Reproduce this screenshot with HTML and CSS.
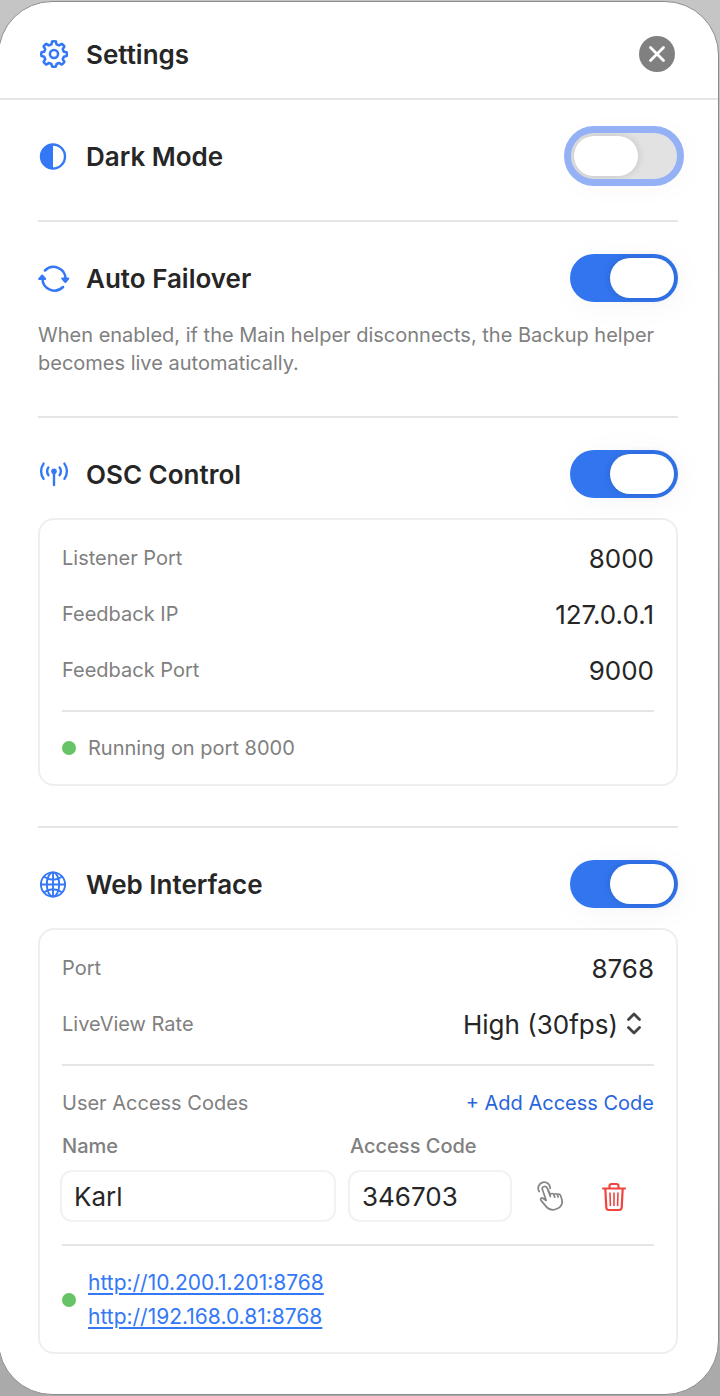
FILE: index.html
```html
<!DOCTYPE html>
<html lang="en">
<head>
<meta charset="utf-8">
<meta name="viewport" content="width=device-width, initial-scale=1">
<title>Settings</title>
<link rel="stylesheet" href="styles.css">
</head>
<body>
<main class="sheet">
  <header class="header">
    <svg class="icon" viewBox="-1 -.5 34 34" fill="none" stroke="currentColor" stroke-width="2.7" stroke-linejoin="round"><path d="M14 3.200q2-.6 4 0l.7 3.100 2.700 1.100 2.800-1.700q1.800 1 2.800 2.800l-1.700 2.800 1.100 2.700 3 .7q.6 2 0 4l-3 .7-1.100 2.700 1.700 2.800q-1 1.800-2.800 2.800l-2.800-1.700-2.700 1.100-.7 2.700q-2 .6-4 0l-.7-2.700-2.700-1.100-2.800 1.700q-1.800-1-2.800-2.800l1.700-2.800-1.100-2.700-2.900-.7q-.6-2 0-4l2.900-.7 1.100-2.700L5 8.500q1-1.800 2.800-2.800l2.800 1.700 2.700-1.100z"/><circle cx="16" cy="16.500" r="4.300"/></svg>
    <h1 class="title">Settings</h1>
    <button class="close" type="button" aria-label="Close"><svg viewBox="0 0 36 36" fill="none" stroke="#fff" stroke-width="2.8" stroke-linecap="round"><path d="M11.5 11.5l13 13M24.5 11.5l-13 13"/></svg></button>
  </header>

  <div class="content">
    <section class="section">
      <div class="heading">
        <svg class="icon" viewBox="0 0 32 32"><circle cx="15" cy="16.500" r="12" fill="none" stroke="currentColor" stroke-width="2.400"/><path d="M15 4.500a12 12 0 0 0 0 24z" fill="currentColor"/></svg>
        <h2 class="title"><label for="dark">Dark Mode</label></h2>
        <input class="toggle focused" type="checkbox" role="switch" id="dark">
      </div>
    </section>

    <section class="section">
      <div class="heading">
        <svg class="icon" viewBox="0 0 32 32" fill="none" stroke="currentColor" stroke-width="2.5" stroke-linecap="round"><path d="M7 8.500a12 12 0 0 1 20.500 8.500M25 25a12 12 0 0 1-20.500-8.500"/><path d="M24.300 16.500h6l-3 3.500zM1.200 17h6l-3-3.500z" fill="currentColor" stroke-width="2" stroke-linejoin="round"/></svg>
        <h2 class="title"><label for="failover">Auto Failover</label></h2>
        <input class="toggle" type="checkbox" role="switch" id="failover" checked>
      </div>
      <p class="hint">When enabled, if the Main helper disconnects, the Backup helper becomes live automatically.</p>
    </section>

    <section class="section">
      <div class="heading">
        <svg class="icon" viewBox="0 0 32 32" fill="none" stroke="currentColor" stroke-width="2.400" stroke-linecap="round"><path d="M16 13v14M10.400 9.400a7 7 0 0 0 0 7.800M21.600 9.400a7 7 0 0 1 0 7.800M5.600 5.600a13 13 0 0 0 0 15.300M26.400 5.600a13 13 0 0 1 0 15.300"/><circle cx="16" cy="13.300" r="2.800" fill="currentColor" stroke="none"/></svg>
        <h2 class="title"><label for="osc">OSC Control</label></h2>
        <input class="toggle" type="checkbox" role="switch" id="osc" checked>
      </div>
      <div class="card">
        <div class="row"><label for="listener">Listener Port</label><input class="value" id="listener" type="text" value="8000"></div>
        <div class="row"><label for="ip">Feedback IP</label><input class="value" id="ip" type="text" value="127.0.0.1"></div>
        <div class="row"><label for="feedback">Feedback Port</label><input class="value" id="feedback" type="text" value="9000"></div>
        <div class="status"><span class="dot"></span><span>Running on port 8000</span></div>
      </div>
    </section>

    <section class="section">
      <div class="heading">
        <svg class="icon" viewBox="0 0 32 32" fill="none" stroke="currentColor" stroke-width="1.900"><circle cx="15" cy="16.500" r="12.100"/><ellipse cx="15" cy="16.500" rx="6.200" ry="12.100"/><path d="M15 4.500v24M3 16.500h24M6 8.700q9 6 18 0M6 24.300q9-6 18 0"/></svg>
        <h2 class="title"><label for="web">Web Interface</label></h2>
        <input class="toggle" type="checkbox" role="switch" id="web" checked>
      </div>
      <div class="card">
        <div class="row"><label for="port">Port</label><input class="value" id="port" type="text" value="8768"></div>
        <div class="row">
          <label for="rate">LiveView Rate</label>
          <span class="picker">
            <select id="rate"><option>High (30fps)</option></select>
            <svg viewBox="0 0 16 24" fill="none" stroke="#444" stroke-width="2.800" stroke-linecap="round" stroke-linejoin="round"><path d="M2.500 7.500L8 2 13.500 7.500M2.500 15.500L8 21 13.500 15.500"/></svg>
          </span>
        </div>
        <div class="access">
          <div class="access-head"><span>User Access Codes</span><button class="add" type="button">+ Add Access Code</button></div>
          <div class="codes">
            <label for="name">Name</label>
            <label for="code">Access Code</label>
            <input class="field name" id="name" type="text" value="Karl">
            <input class="field" id="code" type="text" value="346703">
            <button class="tool" type="button" aria-label="Touch access"><svg viewBox="0 0 32 32" fill="none" stroke="#858585" stroke-width="1.700" stroke-linecap="round" stroke-linejoin="round"><path d="M5.200 11.500A6 6 0 1 1 16.200 8.500M9.600 6.700c-1.400.5-1.600 1.700-1.200 2.800l3.800 11-3.300-2.300c-1.500-.9-3 .9-1.700 2.400l4.800 5.800c3 3.600 7.500 4.200 11.500 2.200 4.200-2.200 5.400-6.200 4-10.300l-1.200-3.300c-.6-1.500-2.600-1.200-2.800.2-.4-1.700-3-2-3.500-.3-.5-1.700-3.100-1.900-3.600-.3l-3.300-6.600c-.6-1.300-2-1.800-3.500-1.300zM14 10.500l2.400 6M19.900 14.900l.8 2.200M23.500 15.200l.6 1.800"/></svg></button>
            <button class="tool" type="button" aria-label="Delete"><svg viewBox="0 0 32 32" fill="none" stroke="#f0453f" stroke-width="2.200" stroke-linecap="round" stroke-linejoin="round"><path d="M5 8.500h22M11.500 8.500V6q0-2 2-2h5q2 0 2 2v2.500M7.300 8.500l1 19q.2 2.500 2.500 2.500h10.400q2.300 0 2.500-2.500l1-19"/><path d="M12 13l.4 12.500M16 13v12.500M20 13l-.4 12.500" stroke-width="1.600"/></svg></button>
          </div>
        </div>
        <div class="links">
          <span class="dot"></span>
          <div class="urls"><a href="http://10.200.1.201:8768">http://10.200.1.201:8768</a><a href="http://192.168.0.81:8768">http://192.168.0.81:8768</a></div>
        </div>
      </div>
    </section>
  </div>
</main>
</body>
</html>
```
FILE: styles.css
```css
* { box-sizing: border-box; }

body {
  margin: 0;
  padding: 1px 1px 2px 0;
  background: linear-gradient(#c5c5c5, #aaa);
  color: #262626;
  font: 20px/28px Inter, "Liberation Sans", sans-serif;
}

.sheet {
  margin-left: -2px;
  overflow: hidden;
  border: 1px solid #8c8c8c;
  border-radius: 54px;
  background: #fff;
}

button, input, select {
  margin: 0;
  padding: 0;
  border: 0;
  background: none;
  color: inherit;
  font: inherit;
}

.header {
  display: flex;
  align-items: center;
  height: 98px;
  padding: 8px 43px 0 39px;
  border-bottom: 2px solid #e5e5e5;
}

.icon {
  flex: none;
  width: 32px;
  height: 32px;
  margin-right: 16px;
  color: #3478f6;
}

.title {
  flex: 1;
  margin: 0;
  padding-top: 2px;
  font-size: 26px;
  font-weight: 600;
  line-height: 32px;
}

.close {
  width: 36px;
  height: 36px;
  border-radius: 50%;
  background: #808080;
}

.close svg { display: block; }

.content { padding: 0 40px 0 39px; }

.section {
  padding: 32px 0 40px;
  border-bottom: 2px solid #e5e5e5;
}

.section:last-child { border-bottom: 0; }

.heading { display: flex; align-items: center; }

.toggle {
  display: flex;
  appearance: none;
  width: 108px;
  height: 48px;
  padding: 4px;
  border-radius: 24px;
  background: #e2e2e2;
  box-shadow: 4px 4px 32px #0000000a;
}

.toggle::before {
  content: "";
  width: 64px;
  border-radius: 20px;
  background: #fff;
  box-shadow: 0 0 8px #00000024;
}

.toggle:checked {
  justify-content: flex-end;
  background: #3275ee;
}

.toggle.focused {
  outline: 7px solid #95b1f5;
  outline-offset: -1px;
}

.hint {
  margin: 19px 0 -1px;
  color: #808080;
}

.card {
  margin-top: 20px;
  padding: 10px 22px 0;
  border: 2px solid #eee;
  border-radius: 16px;
  color: #808080;
}

.row {
  display: flex;
  align-items: center;
  justify-content: space-between;
  height: 56px;
}

.value {
  width: 50%;
  padding-top: 2px;
  color: #262626;
  font-size: 26px;
  line-height: 32px;
  text-align: right;
}

.picker {
  display: flex;
  align-items: center;
  gap: 8px;
  padding-right: 12px;
  color: #262626;
  font-size: 26px;
}

.picker select {
  appearance: none;
  padding-top: 2px;
  line-height: 32px;
}

.picker svg { width: 16px; height: 24px; }

.status {
  display: flex;
  align-items: center;
  gap: 12px;
  height: 74px;
  margin-top: 12px;
  border-top: 2px solid #e5e5e5;
}

.dot {
  width: 14px;
  height: 14px;
  border-radius: 50%;
  background: #66c466;
}

.access {
  margin-top: 12px;
  padding: 20px 0 22px;
  border-top: 2px solid #e5e5e5;
  border-bottom: 2px solid #e5e5e5;
}

.access-head {
  display: flex;
  align-items: center;
  justify-content: space-between;
  height: 34px;
}

.add { color: #2866dc; }

.codes {
  display: grid;
  grid-template-columns: 1fr 164px 52px 52px;
  column-gap: 12px;
  align-items: center;
  padding: 12px 14px 0 0;
  margin-left: -2px;
  font-weight: 500;
}

.codes label { padding: 0 2px 10px; }

.field {
  grid-row: 2;
  width: 100%;
  height: 52px;
  padding: 0 12px;
  border: 2px solid #f2f2f2;
  border-radius: 12px;
  color: #262626;
  font-size: 26px;
  font-weight: 400;
}

.tool {
  display: grid;
  grid-row: 2;
  place-items: center;
  height: 52px;
}

.tool svg { width: 32px; height: 32px; }

.links {
  display: flex;
  align-items: center;
  gap: 12px;
  padding: 20px 0 18px;
}

.urls {
  display: grid;
  font-size: 21px;
  line-height: 34px;
}

.urls a {
  color: #3478f6;
  text-decoration-thickness: 2px;
  text-underline-offset: 3px;
}
```
